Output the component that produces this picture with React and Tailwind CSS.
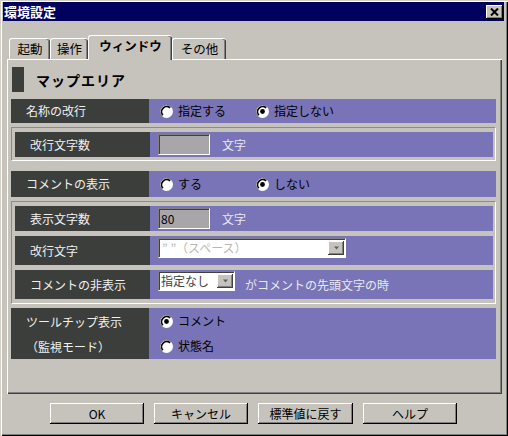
import React from "react";

const face = "bg-[#c6c3bc]";

const Radio = ({ checked }) => (
  <svg width="13" height="13" viewBox="0 0 13 13" className="shrink-0">
    <circle cx="6.5" cy="6.5" r="6.5" fill="#ffffff" />
    <path d="M1.9 11.1 A6.5 6.5 0 0 1 11.1 1.9" fill="none" stroke="#808080" strokeWidth="1" />
    <path d="M2.9 10.1 A5.1 5.1 0 0 1 10.1 2.9" fill="none" stroke="#000000" strokeWidth="1.6" />
    {checked && <circle cx="6.5" cy="6.5" r="2.4" fill="#000000" />}
  </svg>
);

const Option = ({ checked, label, className = "" }) => (
  <div className={`flex items-center gap-[5px] ${className}`}>
    <Radio checked={checked} />
    <span className="text-[12px] leading-none text-black">{label}</span>
  </div>
);

const Label = ({ children, w = "w-[138px]" }) => (
  <div className={`${w} shrink-0 bg-[#3b3e3b] pl-[15px] flex items-center text-[12px] leading-none text-[#f0f0f0]`}>
    {children}
  </div>
);

const Row = ({ label, h, labelW, children, pl = "pl-[11px]" }) => (
  <div className={`flex ${h}`}>
    <Label w={labelW}>{label}</Label>
    <div className={`flex-1 bg-[#7974b7] flex items-center ${pl}`}>{children}</div>
  </div>
);

const Group = ({ children, className = "" }) => (
  <div
    className={`border border-t-[#8e8b85] border-l-[#8e8b85] border-b-white border-r-white pl-[3px] pr-[2px] pt-[4px] flex flex-col ${className}`}
  >
    {children}
  </div>
);

const Sunken = ({ className = "", children }) => (
  <div
    className={`border border-t-[#808080] border-l-[#808080] border-b-white border-r-white shadow-[inset_1px_1px_0_#404040] ${className}`}
  >
    {children}
  </div>
);

const DropButton = () => (
  <div className={`w-[16px] h-[14px] ${face} shadow-[inset_-1px_-1px_0_#404040,inset_1px_1px_0_#ffffff,inset_-2px_-2px_0_#808080] flex items-center justify-center`}>
    <svg width="7" height="4" viewBox="0 0 7 4">
      <path d="M1 0.5 H6 L3.5 3.5 Z" fill="#606060" />
    </svg>
  </div>
);

const Tab = ({ label, w, selected }) => (
  <div
    className={`${w} ${
      selected ? "h-[25px] mb-[-1px] relative z-10 font-bold pb-[4px]" : "h-[21px]"
    } ${face} border-t border-l border-white rounded-t-[3px] shadow-[inset_-1px_0_0_#404040,inset_-2px_0_0_#808080] flex items-center justify-center text-[12.5px] leading-none text-black`}
  >
    {label}
  </div>
);

const Button = ({ label, w = "w-[94px]" }) => (
  <div
    className={`${w} h-[21px] ${face} shadow-[inset_-1px_-1px_0_#000000,inset_1px_1px_0_#ffffff,inset_-2px_-2px_0_#808080] flex items-center justify-center text-[12px] leading-none text-black`}
  >
    {label}
  </div>
);

export default function App() {
  return (
    <div
      className={`w-[508px] h-[436px] ${face} p-[2px] pr-[3px] shadow-[inset_1px_1px_0_#d4d0c8,inset_2px_2px_0_#ffffff,inset_-1px_-1px_0_#000000,inset_-2px_-2px_0_#808080] flex flex-col font-['Noto_Sans_CJK_JP',sans-serif]`}
    >
      {/* title bar */}
      <div className="mx-[1px] h-[19px] bg-[#00005f] flex items-center justify-between pl-[1px] pr-[1px]">
        <span className="text-[13px] font-bold leading-none text-white">環境設定</span>
        <div className={`w-[17px] h-[14px] ${face} shadow-[inset_-1px_-1px_0_#000000,inset_1px_1px_0_#ffffff,inset_-2px_-2px_0_#808080] flex items-center justify-center`}>
          <svg width="9" height="8" viewBox="0 0 9 8">
            <path d="M1 0.5 L8 7.5 M8 0.5 L1 7.5" stroke="#000" strokeWidth="2" />
          </svg>
        </div>
      </div>

      {/* tabs */}
      <div className="mt-[14px] flex items-end h-[24px] pl-[7px]">
        <Tab label="起動" w="w-[41px]" />
        <Tab label="操作" w="w-[38px]" />
        <Tab label="ウィンドウ" w="w-[84px]" selected />
        <Tab label="その他" w="w-[54px]" />
      </div>

      {/* panel */}
      <div
        className={`ml-[5px] w-[495px] h-[335px] ${face} border-t border-l border-white shadow-[inset_-1px_-1px_0_#404040,inset_-2px_-2px_0_#808080] pl-[3px] pr-[6px] pt-[7px] flex flex-col`}
      >
        <div className="flex items-center h-[25px]">
          <div className="ml-[1px] w-[12px] h-[25px] bg-[#3b3e3b]" />
          <span className="ml-[12px] text-[14px] font-bold tracking-[1px] leading-none text-black">
            マップエリア
          </span>
        </div>

        <div className="mt-[7px]">
          <Row label="名称の改行" h="h-[24px]">
            <Option checked={false} label="指定する" className="w-[96px]" />
            <Option checked label="指定しない" />
          </Row>
        </div>

        <Group className="mt-[4px] h-[34px]">
          <Row label="改行文字数" h="h-[25px]" labelW="w-[135px]" pl="pl-[8px]">
            <Sunken className="w-[52px] h-[21px] bg-[#a9a6aa]" />
            <span className="ml-[12px] text-[12px] leading-none text-[#e8e8ee]">文字</span>
          </Row>
        </Group>

        <div className="mt-[10px]">
          <Row label="コメントの表示" h="h-[26px]">
            <Option checked={false} label="する" className="w-[96px]" />
            <Option checked label="しない" />
          </Row>
        </div>

        <Group className="mt-[4px] h-[103px] gap-[5px]">
          <Row label="表示文字数" h="h-[25px]" labelW="w-[135px]" pl="pl-[8px]">
            <Sunken className="w-[52px] h-[21px] bg-[#a9a6aa] flex items-center pl-[2px] text-[12px] leading-none text-black">
              80
            </Sunken>
            <span className="ml-[12px] text-[12px] leading-none text-[#e8e8ee]">文字</span>
          </Row>
          <Row label="改行文字" h="h-[29px]" labelW="w-[135px]" pl="pl-[8px]">
            <Sunken className="mb-[6px] w-[188px] h-[20px] bg-white flex items-center justify-between pl-[3px] pr-[1px] text-[12px] leading-none text-[#b8b8b8]">
              <span>” ”（スペース）</span>
              <DropButton />
            </Sunken>
          </Row>
          <Row label="コメントの非表示" h="h-[29px]" labelW="w-[135px]" pl="pl-[8px]">
            <Sunken className="mb-[8px] w-[77px] h-[20px] bg-white flex items-center justify-between pl-[2px] pr-[1px] text-[12px] leading-none text-[#404040]">
              <span>指定なし</span>
              <DropButton />
            </Sunken>
            <span className="ml-[10px] text-[12px] leading-none text-[#e8e8ee]">
              がコメントの先頭文字の時
            </span>
          </Row>
        </Group>

        <div className="mt-[4px] flex h-[51px]">
          <div className="w-[138px] shrink-0 bg-[#3b3e3b] pl-[15px] flex flex-col justify-center text-[12px] leading-[25px] text-[#f0f0f0]">
            <span>ツールチップ表示</span>
            <span>（監視モード）</span>
          </div>
          <div className="flex-1 bg-[#7974b7] pl-[11px] flex flex-col justify-center">
            <Option checked label="コメント" className="h-[25px]" />
            <Option checked={false} label="状態名" className="h-[25px]" />
          </div>
        </div>
      </div>

      {/* buttons */}
      <div className="mt-[9px] flex justify-center gap-[10px]">
        <Button label="OK" />
        <Button label="キャンセル" />
        <Button label="標準値に戻す" w="w-[95px]" />
        <Button label="ヘルプ" />
      </div>
    </div>
  );
}
